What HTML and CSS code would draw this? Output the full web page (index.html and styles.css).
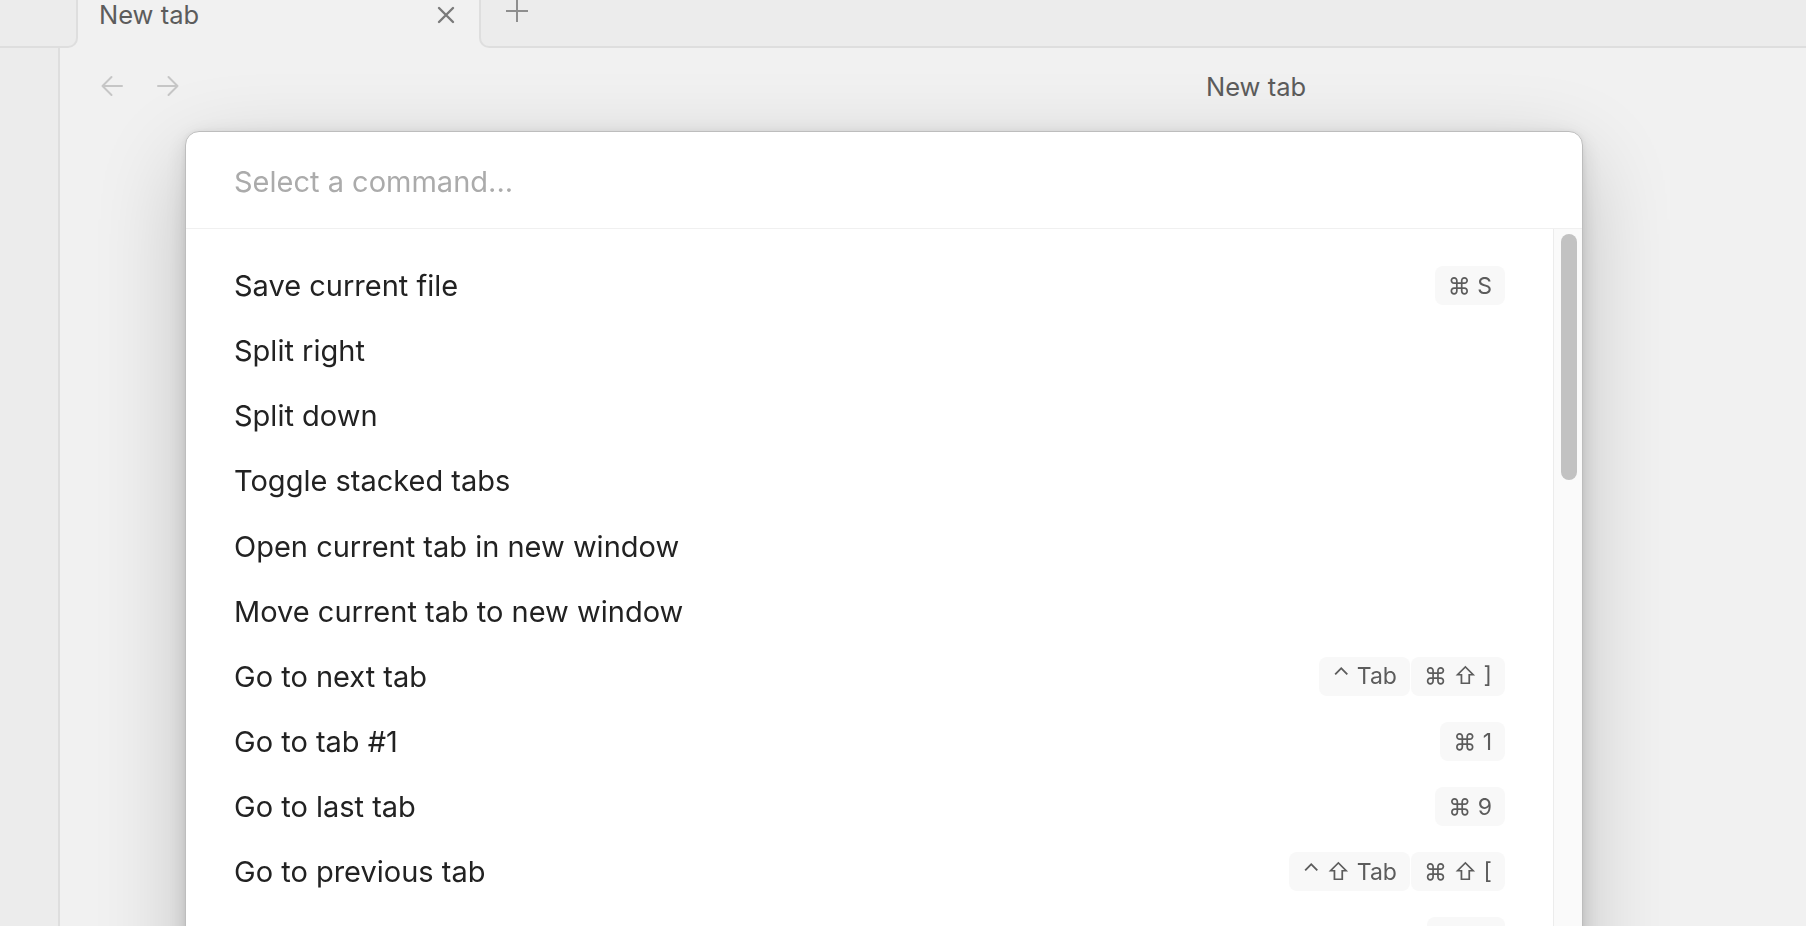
FILE: index.html
```html
<!DOCTYPE html>
<html lang="en">
<head>
<meta charset="utf-8">
<title>New tab</title>
<link rel="stylesheet" href="styles.css">
</head>
<body>
<div class="app">
  <div class="tabbar">
    <div class="tab-left"></div>
    <div class="tab">
      <span class="tab-title">New tab</span>
      <svg class="tab-close" viewBox="0 0 18 18" width="18" height="18"><path d="M2 2 L16 16 M16 2 L2 16" /></svg>
    </div>
    <div class="tab-right">
      <svg class="tab-new" viewBox="0 0 24 24" width="24" height="24"><path d="M12 1 V23 M1 12 H23" /></svg>
    </div>
  </div>
  <div class="workspace">
    <div class="ribbon"></div>
    <div class="main">
      <div class="view-header">
        <div class="nav">
          <svg class="nav-arrow" viewBox="0 0 22 22" width="22" height="22"><path d="M21 11 H1.5 M10.5 2 L1.5 11 L10.5 20" /></svg>
          <svg class="nav-arrow" viewBox="0 0 22 22" width="22" height="22"><path d="M1 11 H20.5 M11.5 2 L20.5 11 L11.5 20" /></svg>
        </div>
        <div class="view-title">New tab</div>
      </div>
    </div>
  </div>
</div>

<div class="modal-layer">
  <div class="prompt">
    <div class="prompt-input">Select a command...</div>
    <div class="prompt-body">
      <div class="results">
        <div class="item"><span class="label">Save current file</span><span class="keys"><kbd class="key">⌘ S</kbd></span></div>
        <div class="item"><span class="label">Split right</span></div>
        <div class="item"><span class="label">Split down</span></div>
        <div class="item"><span class="label">Toggle stacked tabs</span></div>
        <div class="item"><span class="label">Open current tab in new window</span></div>
        <div class="item"><span class="label">Move current tab to new window</span></div>
        <div class="item"><span class="label">Go to next tab</span><span class="keys"><kbd class="key">⌃ Tab</kbd><kbd class="key">⌘ ⇧ ]</kbd></span></div>
        <div class="item"><span class="label">Go to tab #1</span><span class="keys"><kbd class="key">⌘ 1</kbd></span></div>
        <div class="item"><span class="label">Go to last tab</span><span class="keys"><kbd class="key">⌘ 9</kbd></span></div>
        <div class="item"><span class="label">Go to previous tab</span><span class="keys"><kbd class="key">⌃ ⇧ Tab</kbd><kbd class="key">⌘ ⇧ [</kbd></span></div>
        <div class="item"><span class="label">Close current tab</span><span class="keys"><kbd class="key">⌘ W</kbd></span></div>
      </div>
      <div class="scroll-track"><div class="scroll-thumb"></div></div>
    </div>
  </div>
</div>
</body>
</html>
```

FILE: styles.css
```css
html, body {
  margin: 0;
  padding: 0;
  height: 100%;
  overflow: hidden;
}

body {
  font-family: "Inter", "DejaVu Sans", sans-serif;
  background: #f1f1f1;
  color: #222222;
}

.app {
  display: flex;
  flex-direction: column;
  height: 926px;
}

/* ---------- tab bar ---------- */
.tabbar {
  display: flex;
  height: 48px;
  flex: none;
  background: #f1f1f1;
}

.tab-left {
  width: 76px;
  flex: none;
  background: #ececec;
  border-right: 2px solid #dedede;
  border-bottom: 2px solid #dedede;
  border-bottom-right-radius: 10px;
}

.tab {
  width: 401px;
  flex: none;
  display: flex;
  align-items: flex-start;
  padding-left: 21px;
  box-sizing: border-box;
  background: #f1f1f1;
}

.tab-title {
  font-size: 25.5px;
  line-height: 30px;
  color: #5c5c5c;
}

.tab-close {
  margin-left: auto;
  margin-right: 24px;
  margin-top: 6px;
  fill: none;
  stroke: #7a7a7a;
  stroke-width: 2.4;
  stroke-linecap: round;
}

.tab-right {
  flex: 1;
  background: #ececec;
  border-left: 2px solid #dedede;
  border-bottom: 2px solid #dedede;
  border-bottom-left-radius: 10px;
  display: flex;
  align-items: flex-start;
}

.tab-new {
  margin-left: 24px;
  margin-top: -1px;
  fill: none;
  stroke: #8e8e8e;
  stroke-width: 2;
}

/* ---------- workspace ---------- */
.workspace {
  flex: 1;
  display: flex;
}

.ribbon {
  width: 58px;
  flex: none;
  background: #ececec;
  border-right: 2px solid #dedede;
}

.main {
  flex: 1;
  background: #f1f1f1;
}

.view-header {
  display: flex;
  align-items: center;
  height: 76px;
}

.nav {
  display: flex;
  gap: 34px;
  margin-left: 41px;
}

.nav-arrow {
  fill: none;
  stroke: #c6c6c6;
  stroke-width: 2;
  stroke-linecap: round;
  stroke-linejoin: round;
}

.view-title {
  margin-left: 1027px;
  font-size: 25.5px;
  color: #5c5c5c;
}

/* ---------- command palette ---------- */
.modal-layer {
  position: fixed;
  inset: 0;
  padding: 131px 0 0 185px;
  box-sizing: border-box;
}

.prompt {
  width: 1398px;
  height: 900px;
  box-sizing: border-box;
  background: #ffffff;
  border: 1px solid #bdbdbd;
  border-radius: 14px;
  box-shadow:
    0 1.8px 7.3px rgba(0, 0, 0, 0.071),
    0 6.3px 24.7px rgba(0, 0, 0, 0.112),
    0 30px 90px rgba(0, 0, 0, 0.2);
  display: flex;
  flex-direction: column;
  overflow: hidden;
}

.prompt-input {
  height: 97px;
  flex: none;
  box-sizing: border-box;
  padding: 2px 0 0 48px;
  display: flex;
  align-items: center;
  font-size: 29px;
  color: #ababab;
  border-bottom: 1px solid #f0f0f0;
}

.prompt-body {
  flex: 1;
  display: flex;
}

.results {
  flex: 1;
  padding: 24px 48px 0 48px;
}

.item {
  height: 65.15px;
  display: flex;
  align-items: center;
}

.label {
  font-size: 29px;
  color: #222222;
}

.keys {
  margin-left: auto;
  display: flex;
  gap: 1px;
}

.key {
  font-family: "Inter", "DejaVu Sans", sans-serif;
  height: 39px;
  padding: 0 13px;
  display: flex;
  align-items: center;
  font-size: 23px;
  color: #5c5c5c;
  background: #f8f8f8;
  border-radius: 8px;
  white-space: pre;
}

.scroll-track {
  width: 28px;
  flex: none;
  background: #fafafa;
  border-left: 1px solid #ececec;
  padding-top: 5px;
}

.scroll-thumb {
  width: 16px;
  height: 246px;
  margin-left: 7px;
  border-radius: 8px;
  background: #c2c2c2;
}
```
